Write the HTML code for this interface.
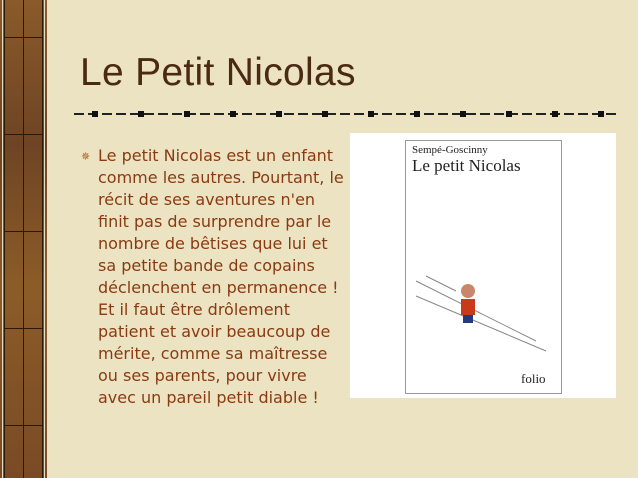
<!DOCTYPE html>
<html><head><meta charset="utf-8"><style>
html,body{margin:0;padding:0}
body{width:638px;height:478px;position:relative;overflow:hidden;background:#ece3c3;font-family:"DejaVu Sans","Liberation Sans",sans-serif}
.strip{position:absolute;left:0;top:0;width:47px;height:478px;background:linear-gradient(180deg,#8a5a2a,#6e4424 30%,#8c5c28 60%,#7a4a26);}
.strip:before{content:"";position:absolute;left:2px;right:2px;top:0;bottom:0;border-left:1px solid #e8dcc0;border-right:1px solid #e8dcc0;}
.strip:after{content:"";position:absolute;left:4px;right:4px;top:0;bottom:0;border-left:1px solid #2a1808;border-right:1px solid #2a1808;
background:repeating-linear-gradient(180deg,transparent 0 37px,#2a1808 37px 38px,transparent 38px 97px);}
.vl{position:absolute;left:23px;top:0;width:1px;height:478px;background:#2a1808}
h1{position:absolute;left:80px;top:51px;margin:0;font-weight:normal;font-family:"Liberation Sans",sans-serif;font-size:39px;color:#4a2a12;letter-spacing:0.3px}
.sep{position:absolute;left:74px;top:113px;width:542px;height:2px;background:repeating-linear-gradient(90deg,#222 0 10px,transparent 10px 14px)}
.sq{position:absolute;top:111px;width:6px;height:6px;background:#111}
.txt{position:absolute;left:98px;top:145px;font-size:16px;line-height:22px;color:#8a3a10;white-space:nowrap}
.bul{position:absolute;left:81px;top:150px;color:#b06020;font-size:11px}
.img{position:absolute;left:350px;top:133px;width:266px;height:265px;background:#fff}
.book{position:absolute;left:405px;top:140px;width:155px;height:252px;border:1px solid #999;font-family:"Liberation Serif",serif;color:#222}
</style></head><body>
<div class="strip"></div><div class="vl"></div>
<h1>Le Petit Nicolas</h1>
<div class="sep"></div>
<div class="sq" style="left:92px"></div><div class="sq" style="left:138px"></div><div class="sq" style="left:184px"></div><div class="sq" style="left:230px"></div><div class="sq" style="left:276px"></div><div class="sq" style="left:322px"></div><div class="sq" style="left:368px"></div><div class="sq" style="left:414px"></div><div class="sq" style="left:460px"></div><div class="sq" style="left:506px"></div><div class="sq" style="left:552px"></div><div class="sq" style="left:598px"></div>
<div class="bul">✵</div>
<div class="txt">Le petit Nicolas est un enfant<br>comme les autres. Pourtant, le<br>récit de ses aventures n'en<br>finit pas de surprendre par le<br>nombre de bêtises que lui et<br>sa petite bande de copains<br>déclenchent en permanence !<br>Et il faut être drôlement<br>patient et avoir beaucoup de<br>mérite, comme sa maîtresse<br>ou ses parents, pour vivre<br>avec un pareil petit diable !</div>
<div class="img"></div>
<div class="book">
<div style="position:absolute;left:6px;top:3px;font-size:11px">Sempé-Goscinny</div>
<div style="position:absolute;left:6px;top:15px;font-size:17px">Le petit Nicolas</div>
<svg style="position:absolute;left:0;top:100px" width="155" height="140">
<path d="M10 40 L130 100 M10 55 L140 110 M20 35 L50 50" stroke="#888" stroke-width="1" fill="none"/>
<circle cx="62" cy="50" r="7" fill="#c8866a"/><rect x="55" y="58" width="14" height="16" fill="#c83a1a"/><rect x="57" y="74" width="10" height="8" fill="#223a80"/>
</svg>
<div style="position:absolute;left:115px;top:230px;font-size:13px">folio</div>
</div>
</body></html>
